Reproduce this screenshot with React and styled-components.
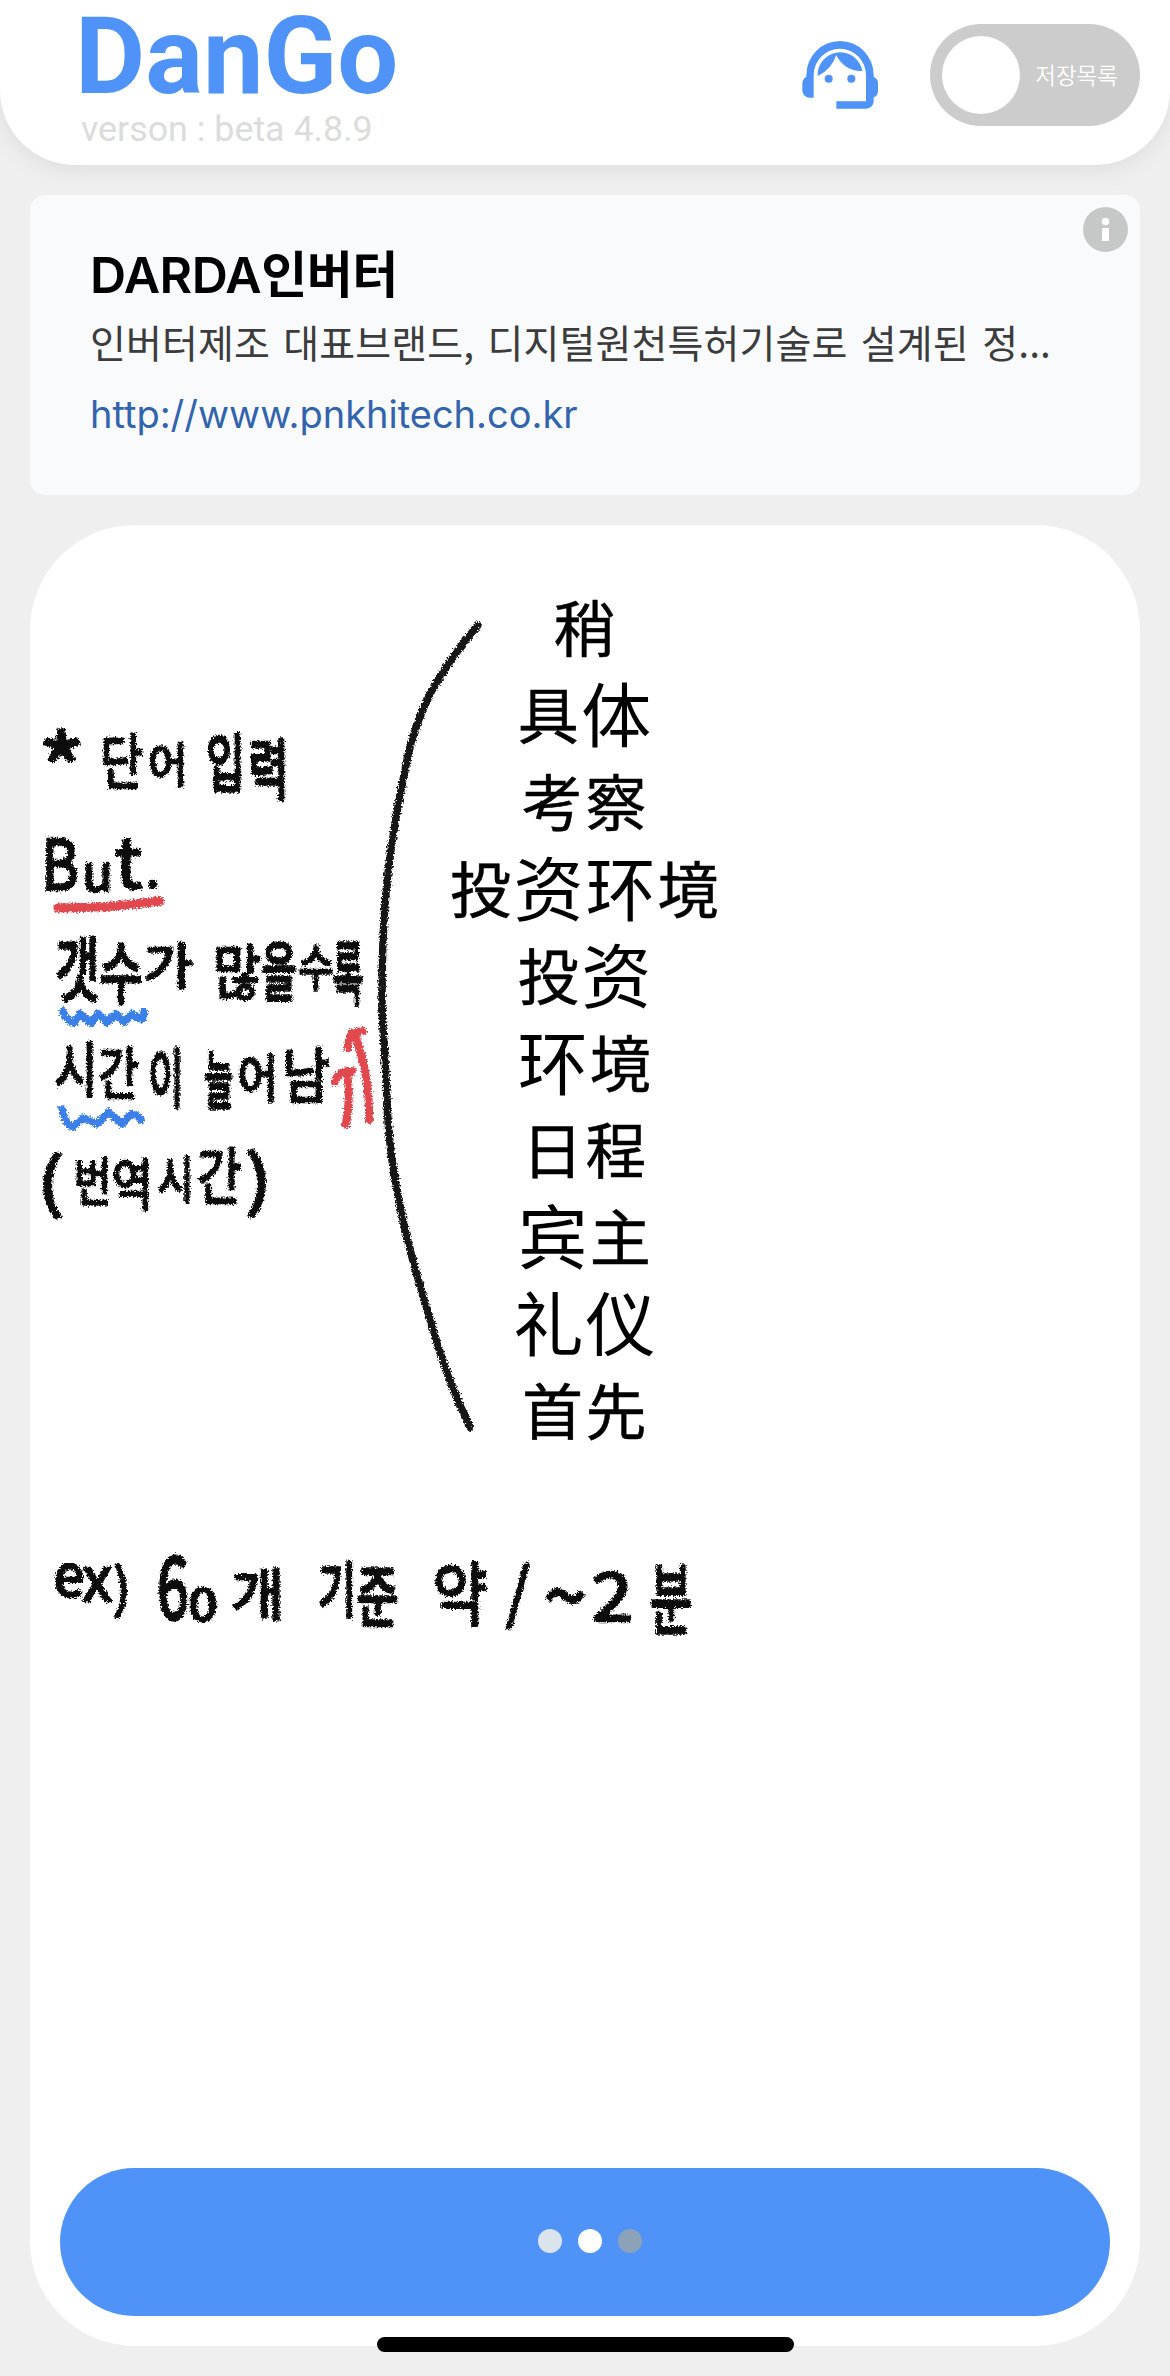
import React from "react";
import styled, { createGlobalStyle } from "styled-components";

const GlobalStyle = createGlobalStyle`
  * { box-sizing: border-box; }
  body { margin: 0; background: #efefef; }
`;

const Screen = styled.div`
  position: relative;
  width: 1170px;
  height: 2376px;
  display: flex;
  flex-direction: column;
  gap: 30px;
  padding-bottom: 30px;
  overflow: hidden;
  background: #efefef;
  font-family: Roboto, "Noto Sans CJK KR", sans-serif;
`;

const Header = styled.header`
  flex: none;
  height: 165px;
  padding: 0 30px 0 81px;
  display: flex;
  align-items: flex-start;
  background: #fff;
  border-radius: 0 0 75px 75px;
  box-shadow: 0 4px 24px rgba(0, 0, 0, 0.08);
`;

const Brand = styled.div`
  flex: 1;
  padding-top: 2px;
  display: flex;
  flex-direction: column;
`;

const Logo = styled.h1`
  margin: 0 0 0 -6px;
  font-size: 108px;
  line-height: 108px;
  font-weight: 700;
  color: #4f93f8;
`;

const Version = styled.span`
  font-size: 35.8px;
  line-height: 42px;
  margin-top: -2px;
  color: #dcdcdc;
`;

const AgentButton = styled.button`
  width: 76px;
  height: 68px;
  margin: 41px 52px 0 0;
  padding: 0;
  border: 0;
  background: none;
  line-height: 0;
`;

const Toggle = styled.div`
  width: 210px;
  height: 102px;
  margin-top: 24px;
  padding: 12px 22px 12px 12px;
  display: flex;
  align-items: center;
  justify-content: space-between;
  border-radius: 51px;
  background: #ccc;
`;

const Knob = styled.span`
  width: 78px;
  height: 78px;
  border-radius: 50%;
  background: #fff;
`;

const ToggleLabel = styled.span`
  padding-bottom: 2px;
  font: 350 22.5px/32px "Noto Sans CJK KR", sans-serif;
  color: #fff;
`;

const Ad = styled.section`
  position: relative;
  flex: none;
  width: 1110px;
  height: 300px;
  margin: 0 30px;
  padding: 49px 60px;
  border-radius: 15px;
  background: #f9fafc;
  font-family: Inter, "Noto Sans CJK KR", sans-serif;
`;

const AdTitle = styled.h2`
  margin: 0;
  font-size: 50px;
  line-height: 62px;
  font-weight: 600;
  letter-spacing: -0.5px;
  color: #000;
`;

const AdText = styled.p`
  margin: 5px 0 0;
  font-size: 39px;
  line-height: 60px;
  font-family: "Noto Sans CJK KR", sans-serif;
  letter-spacing: 0.1px;
  word-spacing: 4.6px;
  white-space: nowrap;
  color: #3c3c3c;
`;

const AdLink = styled.a`
  display: block;
  margin-top: 13px;
  font-size: 38px;
  line-height: 60px;
  color: #3264ad;
`;

const InfoBadge = styled.svg`
  position: absolute;
  top: 12px;
  right: 12px;
`;

const Board = styled.main`
  position: relative;
  flex: 1;
  margin: 0 30px;
  padding: 57px 30px 30px;
  display: flex;
  flex-direction: column;
  background: #fff;
  border-radius: 105px;
`;

const Words = styled.ul`
  flex: 1;
  margin: 0;
  padding: 0;
  list-style: none;
  text-align: center;
  color: #000;
`;

const Word = styled.li`
  height: 87px;
  line-height: 87px;
  font-family: "Noto Sans CJK KR", sans-serif;
  font-size: 61px;
  letter-spacing: 2.6px;
  margin-right: -1px;
  -webkit-text-stroke: 0.5px #000;
`;

const Wide = styled.span`
  font-family: "Noto Sans CJK SC", sans-serif;
  font-size: 70px;
  line-height: 1;
  letter-spacing: 2px;
  vertical-align: -2.5px;
  -webkit-text-stroke: 0;
`;

const Submit = styled.button`
  height: 148px;
  border: 0;
  border-radius: 75px;
  background: #4f93f8;
  display: flex;
  align-items: center;
  justify-content: center;
  gap: 16px;
  padding: 0 0 2px 10px;
`;

const Dot = styled.span`
  width: 24px;
  height: 24px;
  border-radius: 50%;
  background: ${(p) => p.$color};
`;

const Ink = styled.svg`
  position: absolute;
  left: 0;
  top: 0;
  overflow: visible;
  pointer-events: none;
  text {
    font-family: "Noto Sans CJK KR", sans-serif;
    fill: #111;
    stroke: #111;
    stroke-width: 2.6px;
    stroke-linejoin: round;
    white-space: pre;
  }
`;

const HomeBar = styled.div`
  position: absolute;
  left: 377px;
  bottom: 24px;
  width: 417px;
  height: 15px;
  border-radius: 8px;
  background: #000;
`;

const WORDS = ["稍", "具体", "考察", "投资环境", "投资", "环境", "日程", "宾主", "礼仪", "首先"];
const WIDE = "体资环宾礼仪";

/* One entry per handwritten word; each mark is [character, left, top, right, bottom]. */
const NOTES = [
  [["*", 41, 732, 82, 772]],
  [["단", 101, 733, 142, 790]],
  [["어", 149, 743, 187, 787]],
  [["입", 208, 733, 243, 792], ["력", 248, 738, 289, 800]],
  [["B", 44, 838, 76, 891]],
  [["u", 82, 863, 113, 892], ["t", 117, 840, 140, 890], [".", 149, 880, 157, 889]],
  [["갯", 54, 937, 101, 1003], ["수", 103, 941, 139, 1004]],
  [["가", 145, 943, 192, 989]],
  [["많", 214, 944, 260, 1001]],
  [["을", 262, 941, 296, 1001]],
  [["수", 299, 943, 333, 991]],
  [["록", 333, 941, 363, 1007]],
  [["시", 55, 1041, 97, 1098], ["간", 99, 1046, 138, 1099]],
  [["이", 149, 1047, 183, 1108]],
  [["늘", 205, 1050, 233, 1109]],
  [["어", 237, 1053, 279, 1102], ["남", 285, 1047, 327, 1104]],
  [["(", 41, 1149, 60, 1220]],
  [["번", 73, 1157, 112, 1206], ["역", 115, 1157, 150, 1210], ["시", 156, 1155, 195, 1203], ["간", 199, 1147, 240, 1205]],
  [[")", 249, 1145, 268, 1218]],
  [["e", 54, 1563, 84, 1598], ["x", 84, 1567, 110, 1602], [")", 114, 1561, 130, 1620]],
  [["6", 159, 1553, 187, 1621]],
  [["0", 190, 1586, 216, 1621]],
  [["개", 232, 1567, 283, 1620]],
  [["기", 319, 1561, 355, 1618], ["준", 357, 1565, 398, 1627]],
  [["약", 434, 1562, 486, 1627]],
  [["/", 506, 1563, 530, 1629]],
  [["~", 546, 1585, 584, 1608]],
  [["2", 594, 1570, 630, 1622]],
  [["분", 651, 1563, 691, 1635]],
];

/* Width, height and depth below the baseline of each character, in em. */
const METRICS = {
  "*": [0.38, 0.38, -0.38], B: [0.53, 0.73, 0], u: [0.5, 0.55, 0.01], t: [0.35, 0.69, 0.01], ".": [0.13, 0.14, 0.01],
  e: [0.48, 0.57, 0.01], x: [0.48, 0.54, 0], "(": [0.22, 1.07, 0.2], ")": [0.22, 1.07, 0.2],
  6: [0.46, 0.76, 0.01], 0: [0.46, 0.76, 0.01], 2: [0.46, 0.75, 0], "/": [0.37, 0.97, 0.18], "~": [0.46, 0.25, -0.24],
};
const HANGUL = [0.84, 0.91, 0.08];

function Note({ marks }) {
  const boxes = marks.map(([ch, l, t, r, b]) => {
    const [w, h, depth] = METRICS[ch] || HANGUL;
    const size = (b - t - 2) / h;
    return { ch, size, center: (l + r) / 2, y: b - 1 - depth * size, want: r - l - 2, natural: w * size };
  });
  const squeeze = boxes.reduce((s, m) => s + m.want, 0) / boxes.reduce((s, m) => s + m.natural, 0);
  return (
    <text
      transform={`scale(${squeeze} 1)`}
      textAnchor="middle"
      style={{ strokeWidth: squeeze < 0.75 ? 3.6 : 2.6 }}
    >
      {boxes.map((m, i) => (
        <tspan key={i} x={m.center / squeeze} y={m.y} fontSize={m.size}>{m.ch}</tspan>
      ))}
    </text>
  );
}

function Agent() {
  return (
    <svg width="76" height="68" viewBox="126 123 228 204" fill="#4f93f8">
      <path d="M139 225A101 102 0 0 1 341 225V230Q354 236 354 250V272Q354 287 341 292V304A22 22 0 0 1 319 326H229V304H318V225A78.5 79 0 0 0 161 225V293H149A22 22 0 0 1 127 270V252Q127 237 139 230Z" />
      <path d="M173 228A68 68 0 0 1 229 158V164Q216 207 173 228Z" />
      <path d="M228 164V158A68 68 0 0 1 307 213Q255 215 228 164Z" />
      <circle cx="206" cy="236" r="12" />
      <circle cx="274" cy="236" r="12" />
    </svg>
  );
}

export default function App() {
  return (
    <Screen>
      <GlobalStyle />
      <Header>
        <Brand>
          <Logo>DanGo</Logo>
          <Version>verson : beta 4.8.9</Version>
        </Brand>
        <AgentButton><Agent /></AgentButton>
        <Toggle>
          <Knob />
          <ToggleLabel>저장목록</ToggleLabel>
        </Toggle>
      </Header>
      <Ad>
        <AdTitle>DARDA인버터</AdTitle>
        <AdText>인버터제조 대표브랜드, 디지털원천특허기술로 설계된 정...</AdText>
        <AdLink>http://www.pnkhitech.co.kr</AdLink>
        <InfoBadge width="45" height="45" viewBox="0 0 45 45">
          <circle cx="22.5" cy="22.5" r="22.5" fill="#c6c8c8" />
          <circle cx="22.5" cy="14.5" r="3.7" fill="#fff" />
          <path d="M19 21h7v13h-7z" fill="#fff" />
        </InfoBadge>
      </Ad>
      <Board>
        <Words>
          {WORDS.map((word) => (
            <Word key={word}>
              {[...word].map((c, i) => (WIDE.includes(c) ? <Wide key={i}>{c}</Wide> : c))}
            </Word>
          ))}
        </Words>
        <Submit>
          <Dot $color="#dbe4ec" />
          <Dot $color="#ffffff" />
          <Dot $color="#8ba2b8" />
        </Submit>
        <Ink width="1110" height="1821" viewBox="30 525 1110 1821" fill="none" strokeLinecap="round" strokeLinejoin="round">
          <filter id="crayon" filterUnits="userSpaceOnUse" x="30" y="525" width="760" height="1200">
            <feTurbulence type="fractalNoise" baseFrequency="0.6" numOctaves="2" seed="4" />
            <feDisplacementMap in="SourceGraphic" scale="6" xChannelSelector="R" yChannelSelector="G" />
            <feGaussianBlur stdDeviation="0.7" />
          </filter>
          <g filter="url(#crayon)">
            {NOTES.map((marks, i) => <Note key={i} marks={marks} />)}
            <path stroke="#151515" strokeWidth="7.5" d="M478 625C462 644 444 668 430 694C419 716 411 737 406 765C399 800 389 850 385 905C382 945 382 975 382 1000C382 1030 386 1060 387 1100C388 1135 392 1165 398 1195C406 1240 418 1280 431 1322C441 1358 456 1398 470 1427" />
            <path stroke="#e2484f" strokeWidth="9" d="M58 908Q110 908 160 901" />
            <path stroke="#3b7fe8" strokeWidth="8" d="M63 1012Q67 1021 74 1023L80 1014Q86 1019 91 1023L98 1014L107 1022L116 1014L124 1022L132 1014Q137 1018 142 1019L144 1012" />
            <path stroke="#3b7fe8" strokeWidth="7.5" d="M62 1109Q65 1124 73 1127L83 1118Q92 1121 97 1124L109 1112Q117 1120 122 1124L131 1114Q137 1114 141 1120" />
            <path stroke="#e2484f" strokeWidth="8" d="M369 1120Q370 1075 355 1036M348 1048Q348 1040 352 1033L363 1031M346 1124Q351 1097 347 1073M335 1082Q338 1070 352 1071" />
          </g>
        </Ink>
      </Board>
      <HomeBar />
    </Screen>
  );
}
